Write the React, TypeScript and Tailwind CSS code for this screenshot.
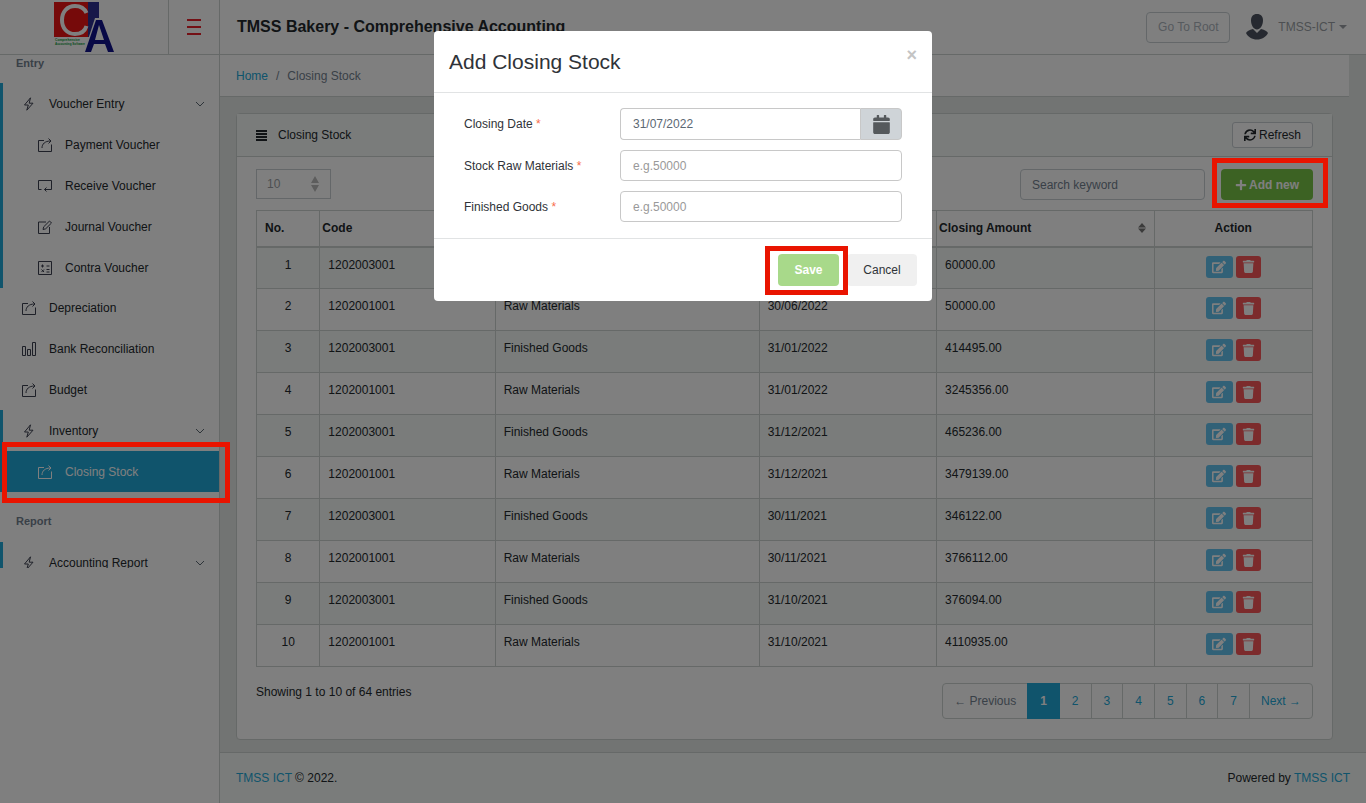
import React, { ReactNode } from "react";
import { FaCalendar, FaEdit, FaPlus, FaSync, FaTrash } from "react-icons/fa";

type IconName = "bolt" | "share" | "loop" | "note" | "calc" | "chart" | "down";

const ICONS: Record<IconName, ReactNode> = {
  bolt: <path d="M8.500.8 2.500 8h3.800L4.800 13.200 11 6.200H7.200z" />,
  share: <path d="M6 2.500H.5v11h13V6.500M4 10c0-4 3-7 8.500-7M10.500.5 13 3l-2.500 2.500" />,
  loop: <path d="M3.500 10.500h-3v-9h13v9H6.500M8.500 8.500l-2 2 2 2" />,
  note: <path d="M8 2H.5v11.500h11V7M5 9.500l.7-2.700L11.500 1l2 2-5.800 5.800z" />,
  calc: <path d="M.5.5h13v13H.5zM3 5h3M4.500 3.500v3M8.500 5h3M3.500 8.500l2.500 2.500M6 8.500 3.500 11M8.500 8.500h3M8.500 11h3" />,
  chart: <path d="M.5 4.500h3v9h-3zM5.500 7.500h3v6h-3zM10.500.5h3v13h-3z" />,
  down: <path d="m3 5 4 4 4-4" />,
};

function LineIcon({ name, className = "" }: { name: IconName; className?: string }) {
  return (
    <svg viewBox="0 0 14 14" fill="none" stroke="currentColor" strokeWidth="1" aria-hidden="true" className={`size-3.5 shrink-0 ${className}`}>
      {ICONS[name]}
    </svg>
  );
}

function NavItem({ icon, children, group, sub, active }: { icon: IconName; children: ReactNode; group?: boolean; sub?: boolean; active?: boolean }) {
  return (
    <a
      href="#"
      className={`flex h-[41px] items-center gap-[13px] pr-3 ${sub ? "pl-[38px]" : "pl-[22px]"} ${active ? "bg-[#20a8d8] text-white" : "text-[#23282c]"}`}
    >
      <LineIcon name={icon} className={active ? "" : "text-[#3c4050]"} />
      <span className="flex-1">{children}</span>
      {group && <LineIcon name="down" className="text-[#5c6873]" />}
    </a>
  );
}

function Sorter() {
  return (
    <svg viewBox="0 0 8 10" className="h-2.5 w-2 shrink-0" fill="#777" aria-hidden="true">
      <path d="M4 0 8 4.500H0zM0 5.500h8L4 10z" />
    </svg>
  );
}

const ROWS: [string, string, string, string][] = [
  ["1202003001", "Finished Goods", "30/06/2022", "60000.00"],
  ["1202001001", "Raw Materials", "30/06/2022", "50000.00"],
  ["1202003001", "Finished Goods", "31/01/2022", "414495.00"],
  ["1202001001", "Raw Materials", "31/01/2022", "3245356.00"],
  ["1202003001", "Finished Goods", "31/12/2021", "465236.00"],
  ["1202001001", "Raw Materials", "31/12/2021", "3479139.00"],
  ["1202003001", "Finished Goods", "30/11/2021", "346122.00"],
  ["1202001001", "Raw Materials", "30/11/2021", "3766112.00"],
  ["1202003001", "Finished Goods", "31/10/2021", "376094.00"],
  ["1202001001", "Raw Materials", "31/10/2021", "4110935.00"],
];

function Logo() {
  return (
    <svg viewBox="0 0 60 50" className="h-[50px] w-[60px]" role="img" aria-label="CA Comprehensive Accounting Software">
      <path fill="#ed1515" d="M0 0h34v35H0z" />
      <path fill="#2e3192" d="M34 0h11v35H34z" />
      <path fill="none" stroke="#fff" strokeWidth="4" d="M32.500 11C30.500 6.500 27 4 21 4 13 4 8 10 8 18s5 14 13 14c6 0 10-3 11.500-8" />
      <path fill="#fff" d="M41 16h8l3 8-3 18h-9l-3 8h-7z" />
      <path fill="#10128c" fillRule="evenodd" d="M42 18h6l12 32h-6l-3-8H40l-3 8h-6zm3 5-4 15h9z" />
      <text x="1" y="39" fill="#0a9b3c" fontSize="3.300" fontWeight="700" fontFamily="Liberation Sans, sans-serif">Comprehensive</text>
      <text x="1" y="43" fill="#0a9b3c" fontSize="3" fontWeight="700" fontFamily="Liberation Sans, sans-serif">Accounting Software</text>
    </svg>
  );
}

function Header() {
  return (
    <header className="flex h-[55px] items-center border-b border-[#cdd2d0] bg-white">
      <div className="flex h-full w-[169px] items-center justify-center border-r border-[#cdd2d0]">
        <Logo />
      </div>
      <button type="button" aria-label="Toggle sidebar" className="flex h-full w-[51px] flex-col items-center justify-center gap-[5px] border-r border-[#cdd2d0]">
        <span className="h-0.5 w-3.5 bg-[#e8202a]" />
        <span className="h-0.5 w-3.5 bg-[#e8202a]" />
        <span className="h-0.5 w-3.5 bg-[#e8202a]" />
      </button>
      <h1 className="flex-1 pl-[17px] text-base font-bold text-[#23282c]">TMSS Bakery - Comprehensive Accounting</h1>
      <button type="button" className="h-[31px] w-[84px] rounded border border-[#c8ced3] text-[#acb4bc]">Go To Root</button>
      <button type="button" className="mr-[19px] ml-4 flex items-center gap-2.5 text-[#9a9fa5]">
        <svg viewBox="0 0 22 26" className="h-[26px] w-[22px]" fill="#4d5360" aria-hidden="true">
          <path d="M11 0c4 0 6 2.500 6 6.500 0 5-3 9-6 9s-6-4-6-9C5 2.500 7 0 11 0zM7 15l4 4 4-4c4 1 6 2 7 4-2 4-6 6.500-11 6.500S2 23 0 19c1-2 3-3 7-4z" />
        </svg>
        <span className="flex items-center gap-1">
          TMSS-ICT
          <svg viewBox="0 0 8 4" className="h-1 w-2" fill="currentColor" aria-hidden="true"><path d="M0 0h8L4 4z" /></svg>
        </span>
      </button>
    </header>
  );
}

function Sidebar() {
  return (
    <nav className="w-[220px] shrink-0 border-r border-[#cdd2d0] bg-white">
      <h2 className="flex h-7 items-start pl-4 text-[11px] leading-[17px] font-bold text-[#73818f]">Entry</h2>
      <div className="-mb-px border-l-[3px] border-[#20a8d8] *:-ml-[3px]">
        <NavItem icon="bolt" group>Voucher Entry</NavItem>
        <NavItem icon="share" sub>Payment Voucher</NavItem>
        <NavItem icon="loop" sub>Receive Voucher</NavItem>
        <NavItem icon="note" sub>Journal Voucher</NavItem>
        <NavItem icon="calc" sub>Contra Voucher</NavItem>
      </div>
      <NavItem icon="share">Depreciation</NavItem>
      <NavItem icon="chart">Bank Reconciliation</NavItem>
      <NavItem icon="share">Budget</NavItem>
      <div className="border-l-[3px] border-[#20a8d8] *:-ml-[3px]">
        <NavItem icon="bolt" group>Inventory</NavItem>
        <NavItem icon="share" sub active>Closing Stock</NavItem>
      </div>
      <h2 className="flex h-[50px] items-center pt-2 pl-4 text-[11px] font-bold text-[#73818f]">Report</h2>
      <div className="h-[26px] overflow-hidden border-l-[3px] border-[#20a8d8] *:-ml-[3px]">
        <NavItem icon="bolt" group>Accounting Report</NavItem>
      </div>
    </nav>
  );
}

const HEAD = "border border-[#cdd2d0] border-b-2 font-bold";
const CELL = "border border-[#cdd2d0] px-2 align-top";
const PAGE = "flex h-[34px] items-center border-r border-[#cdd2d0] px-3 text-[#20a8d8]";

function StockTable() {
  return (
    <table className="w-full table-fixed border-collapse">
      <colgroup>
        <col className="w-[6%]" />
        <col className="w-[16.600%]" />
        <col className="w-[25%]" />
        <col className="w-[16.800%]" />
        <col className="w-[20.600%]" />
        <col className="w-[15%]" />
      </colgroup>
      <thead>
        <tr className="h-9">
          <th className={`${HEAD} pl-2 text-left`}>No.</th>
          <th className={`${HEAD} px-0.5 text-left`}>Code</th>
          <th className={`${HEAD} px-0.5 text-left`}>Stock Type</th>
          <th className={`${HEAD} px-0.5 text-left`}>Closing Date</th>
          <th className={`${HEAD} px-0.5 text-left`}>
            <span className="flex items-center justify-between pr-1.5">Closing Amount <Sorter /></span>
          </th>
          <th className={`${HEAD} text-center`}>Action</th>
        </tr>
      </thead>
      <tbody>
        {ROWS.map((row, i) => (
          <tr key={i} className="h-[42px] odd:bg-[#f4f8f6]">
            <td className={`${CELL} pt-[9px] text-center`}>{i + 1}</td>
            {row.map((value, j) => (
              <td key={j} className={`${CELL} pt-[9px]`}>{value}</td>
            ))}
            <td className={`${CELL} pt-2`}>
              <div className="flex justify-center gap-[3px]">
                <button type="button" aria-label="Edit" className="flex h-[22px] w-[27px] items-center justify-center rounded-[3px] bg-[#63c2ee] text-white">
                  <FaEdit className="size-3.5" />
                </button>
                <button type="button" aria-label="Delete" className="flex h-[22px] w-[25px] items-center justify-center rounded-[3px] bg-[#f85659] text-white">
                  <FaTrash className="size-[13px]" />
                </button>
              </div>
            </td>
          </tr>
        ))}
      </tbody>
    </table>
  );
}

function StockCard() {
  return (
    <section className="mx-4 mt-4 mb-3 rounded border border-[#cdd2d0] bg-white">
      <div className="flex h-[43px] items-center border-b border-[#cdd2d0] bg-[#f4f8f6] px-[19px]">
        <svg viewBox="0 0 11 11" className="mr-[11px] size-[11px]" fill="currentColor" aria-hidden="true">
          <path d="M0 0h11v2H0zM0 3h11v2H0zM0 6h11v2H0zM0 9h11v2H0z" />
        </svg>
        <h2 className="flex-1">Closing Stock</h2>
        <button type="button" className="flex h-[26px] w-[81px] items-center justify-center gap-[3px] rounded-[3px] border border-[#c8ced3] bg-white">
          <FaSync className="size-3" /> Refresh
        </button>
      </div>
      <div className="px-[19px] pt-3 pb-5">
        <div className="flex h-[41px] items-start gap-4">
          <div className="relative">
            <select aria-label="Entries per page" className="h-[30px] w-[75px] appearance-none border border-[#c8ced3] bg-white pl-2.5 text-[#9a9fa5]">
              <option>10</option>
            </select>
            <svg viewBox="0 0 8 16" className="pointer-events-none absolute top-[7px] right-3 h-4 w-2" fill="#bbb" aria-hidden="true">
              <path d="M4 0 8 7H0zM0 9h8l-4 7z" />
            </svg>
          </div>
          <input type="search" aria-label="Search keyword" placeholder="Search keyword" className="ml-auto h-[31px] w-[185px] rounded border border-[#c8ced3] px-[11px] placeholder:text-[#73818f]" />
          <button type="button" className="flex h-[31px] w-[92px] items-center justify-center gap-0.5 rounded bg-[#79c447] font-bold text-white">
            <FaPlus className="size-3" /> Add new
          </button>
        </div>
        <StockTable />
        <div className="flex items-start justify-between pt-4">
          <p className="leading-[18px]">Showing 1 to 10 of 64 entries</p>
          <nav aria-label="Pages" className="flex rounded border border-[#cdd2d0]">
            <a href="#" className="flex h-[34px] items-center px-[11px] text-[#73818f]">← Previous</a>
            <a href="#" aria-current="page" className="-my-px flex h-9 items-center bg-[#20a8d8] px-[13px] font-bold text-white">1</a>
            {[2, 3, 4, 5, 6, 7].map((page) => (
              <a key={page} href="#" className={PAGE}>{page}</a>
            ))}
            <a href="#" className="flex h-[34px] items-center px-[11px] text-[#20a8d8]">Next →</a>
          </nav>
        </div>
      </div>
    </section>
  );
}

const FIELD = "w-full min-w-0 border border-[#c8c8c8] bg-white px-3 text-[#5c6873] placeholder:text-[#999]";

function Field({ id, label, children }: { id: string; label: string; children: ReactNode }) {
  return (
    <div className="flex items-center">
      <label htmlFor={id} className="w-[156px] shrink-0">
        {label} <span className="text-[#f86c4b]">*</span>
      </label>
      <div className="flex min-w-0 flex-1">{children}</div>
    </div>
  );
}

function StockDialog() {
  return (
    <div className="fixed inset-0 z-10 flex items-start justify-center bg-black/50 pt-[31px]">
      <form role="dialog" aria-modal="true" aria-labelledby="dialog-title" className="w-[498px] rounded bg-white text-[#2f3338]">
        <div className="flex h-[62px] items-start justify-between border-b border-[#e1e3e4] px-[15px] pt-4">
          <h2 id="dialog-title" className="text-[21px] leading-[30px]">Add Closing Stock</h2>
          <button type="button" aria-label="Close" className="text-lg leading-4 font-bold text-[#c4c4c4]">×</button>
        </div>
        <div className="flex flex-col gap-2.5 px-[30px] pt-[15px] pb-4">
          <Field id="closing-date" label="Closing Date">
            <input id="closing-date" defaultValue="31/07/2022" className={`${FIELD} h-8 rounded-l border-r-0`} />
            <button type="button" aria-label="Pick a date" className="flex w-[42px] shrink-0 items-center justify-center rounded-r border border-[#c8c8c8] bg-[#cfd4d8] text-[#55595c]">
              <FaCalendar className="size-[19px]" />
            </button>
          </Field>
          <Field id="raw-materials" label="Stock Raw Materials">
            <input id="raw-materials" placeholder="e.g.50000" className={`${FIELD} h-[31px] rounded`} />
          </Field>
          <Field id="finished-goods" label="Finished Goods">
            <input id="finished-goods" placeholder="e.g.50000" className={`${FIELD} h-[31px] rounded`} />
          </Field>
        </div>
        <div className="flex h-[63px] items-center justify-end gap-2 border-t border-[#e1e3e4] px-[15px]">
          <button type="button" className="order-last h-8 w-[70px] rounded bg-[#f0f0f0]">Cancel</button>
          <div className="relative">
            <button type="submit" className="h-8 w-[61px] rounded bg-[#a8d98a] font-bold text-white">Save</button>
            <div className="pointer-events-none absolute -top-2 -right-[9px] -bottom-[9px] -left-[13px] border-[5px] border-[#e91400]" />
          </div>
        </div>
      </form>
    </div>
  );
}

export default function App() {
  return (
    <div className="flex min-h-screen flex-col bg-[#e4e8e6] font-['Liberation_Sans',Arial,sans-serif] text-xs text-[#23282c]">
      <Header />
      <div className="flex flex-1">
        <Sidebar />
        <div className="flex min-w-0 flex-1 flex-col">
          <main className="mr-[17px] flex-1">
            <nav aria-label="Breadcrumb" className="flex h-[42px] items-center gap-2 border-b border-[#cdd2d0] bg-white px-4 text-[#73818f]">
              <a href="#" className="text-[#20a8d8]">Home</a>
              <span>/</span>
              <span>Closing Stock</span>
            </nav>
            <StockCard />
          </main>
          <footer className="flex h-[51px] items-center justify-between border-t border-[#cdd2d0] bg-[#f4f8f6] px-4">
            <span><a href="#" className="text-[#20a8d8]">TMSS ICT</a> © 2022.</span>
            <span>Powered by <a href="#" className="text-[#20a8d8]">TMSS ICT</a></span>
          </footer>
        </div>
      </div>
      <StockDialog />
      <div className="pointer-events-none absolute top-[442px] left-0.5 z-20 h-[61px] w-[228px] border-[5px] border-[#e91400]" />
      <div className="pointer-events-none absolute top-[158px] right-[38px] z-20 h-[50px] w-[116px] border-[5px] border-[#e91400]" />
    </div>
  );
}
